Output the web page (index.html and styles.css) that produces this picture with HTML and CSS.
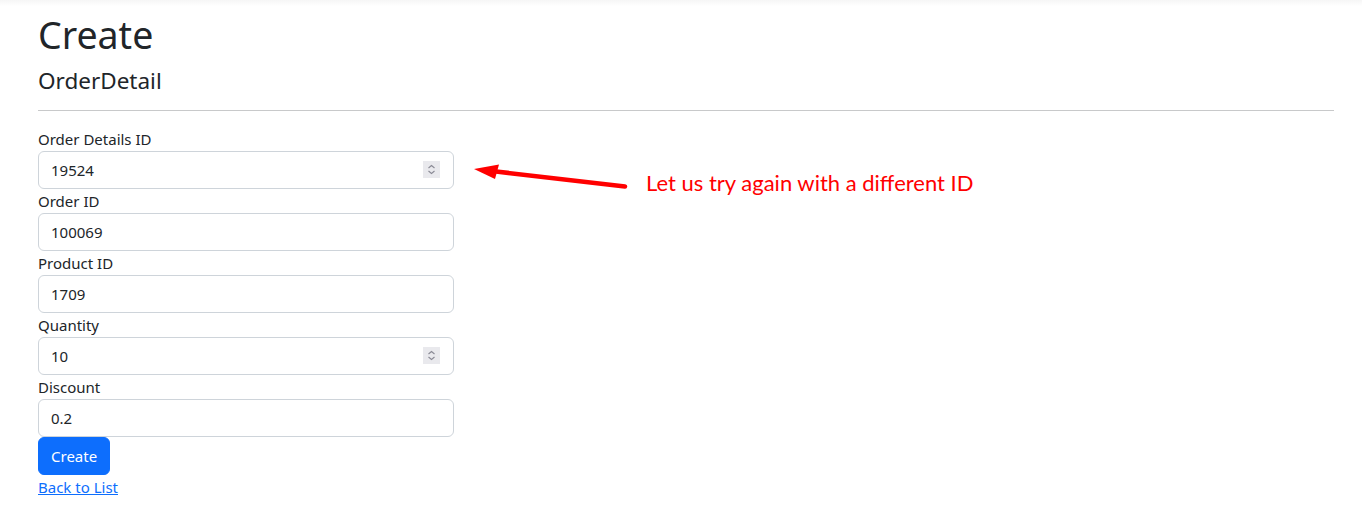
FILE: index.html
```html
<!DOCTYPE html>
<html lang="en">
<head>
<meta charset="utf-8">
<title>Create - OrderDetail</title>
<link rel="stylesheet" href="styles.css">
</head>
<body>
<div class="topshade"></div>
<main class="page">
  <h1 class="title">Create</h1>
  <h4 class="subtitle">OrderDetail</h4>
  <hr class="rule">
  <div class="row">
    <form class="form">
      <div class="group">
        <label class="label">Order Details ID</label>
        <div class="field">
          <input class="control" type="text" value="19524">
          <span class="spin"><svg width="17" height="17" viewBox="0 0 17 17"><path d="M5.5 7 L8.5 4.5 L11.5 7" fill="none" stroke="#8a8a95" stroke-width="1.1"/><path d="M5.5 10 L8.5 12.5 L11.5 10" fill="none" stroke="#8a8a95" stroke-width="1.1"/></svg></span>
        </div>
      </div>
      <div class="group">
        <label class="label">Order ID</label>
        <div class="field"><input class="control" type="text" value="100069"></div>
      </div>
      <div class="group">
        <label class="label">Product ID</label>
        <div class="field"><input class="control" type="text" value="1709"></div>
      </div>
      <div class="group">
        <label class="label">Quantity</label>
        <div class="field">
          <input class="control" type="text" value="10">
          <span class="spin"><svg width="17" height="17" viewBox="0 0 17 17"><path d="M5.5 7 L8.5 4.5 L11.5 7" fill="none" stroke="#8a8a95" stroke-width="1.1"/><path d="M5.5 10 L8.5 12.5 L11.5 10" fill="none" stroke="#8a8a95" stroke-width="1.1"/></svg></span>
        </div>
      </div>
      <div class="group">
        <label class="label">Discount</label>
        <div class="field"><input class="control" type="text" value="0.2"></div>
      </div>
      <div class="actions">
        <button class="btn" type="button">Create</button>
      </div>
      <a class="back" href="#">Back to List</a>
    </form>
    <div class="note">
      <svg class="arrow" width="160" height="40" viewBox="0 0 160 40">
        <line x1="26" y1="22.5" x2="155" y2="37.5" stroke="#ff0000" stroke-width="4.5" stroke-linecap="round"/>
        <polygon points="4,20 29,15.5 25,30" fill="#ff0000"/>
      </svg>
      <span class="note-text">Let us try again with a different ID</span>
    </div>
  </div>
</main>
</body>
</html>
```
FILE: styles.css
```css
html, body {
  margin: 0;
  padding: 0;
  background: #ffffff;
}
body {
  font-family: "Noto Sans", "Open Sans", sans-serif;
  color: #212529;
  font-size: 15px;
  line-height: 1.5;
}
.topshade {
  height: 6px;
  background: linear-gradient(#f6f6f6, #ffffff);
}
.page {
  padding: 0 28px 0 38px;
}
.title {
  margin: 5px 0 7px;
  font-size: 37.5px;
  font-weight: 400;
  line-height: 48px;
}
.subtitle {
  margin: 0 0 15px;
  font-size: 22.5px;
  font-weight: 400;
  line-height: 29px;
}
.rule {
  margin: 0 0 16px;
  border: 0;
  border-top: 1px solid #c8c9ca;
  height: 0;
}
.row {
  display: flex;
  align-items: flex-start;
}
.form {
  width: 416px;
  display: flex;
  flex-direction: column;
}
.label {
  display: block;
  line-height: 24px;
  height: 24px;
}
.field {
  position: relative;
}
.control {
  box-sizing: border-box;
  width: 100%;
  height: 38px;
  margin: 0;
  padding: 6px 12px;
  font: inherit;
  color: #212529;
  border: 1px solid #ced4da;
  border-radius: 6px;
  background: #fff;
  outline: none;
}
.spin {
  position: absolute;
  right: 14px;
  top: 10px;
  width: 17px;
  height: 17px;
  background: #e9e9ed;
  display: block;
}
.spin svg {
  display: block;
}
.actions {
  display: flex;
}
.btn {
  height: 38px;
  padding: 6px 12px;
  font: inherit;
  color: #fff;
  background: #0d6efd;
  border: 1px solid #0d6efd;
  border-radius: 6px;
}
.back {
  align-self: flex-start;
  color: #0d6efd;
  text-decoration: underline;
  line-height: 24px;
}
.note {
  display: flex;
  align-items: flex-start;
  margin-top: 22px;
  margin-left: 16px;
}
.arrow {
  display: block;
}
.note-text {
  margin-left: 16px;
  margin-top: 21px;
  font-family: "Lato", "Liberation Sans", sans-serif;
  font-size: 22px;
  line-height: 1.2;
  color: #ff0000;
}
```
